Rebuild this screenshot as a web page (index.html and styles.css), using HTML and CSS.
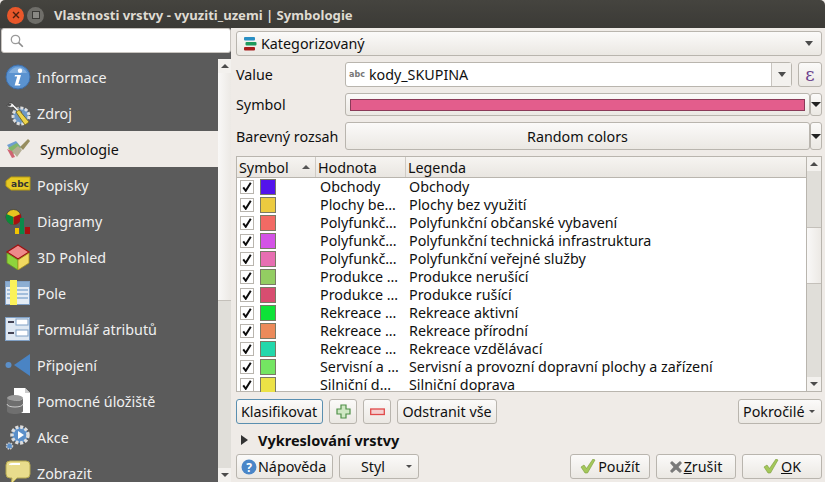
FILE: index.html
```html
<!DOCTYPE html>
<html lang="cs">
<head>
<meta charset="utf-8">
<title>Vlastnosti vrstvy</title>
<link rel="stylesheet" href="styles.css">
</head>
<body>
<svg class="defs" width="0" height="0"><defs><symbol id="tick" viewBox="0 0 12 12"><path d="M1.500 6.500l3 4L10.500 1" fill="none" stroke="#0c0c0c" stroke-width="2.400"/></symbol></defs></svg>
<div class="titlebar">
  <span class="wbtn close"><svg width="10" height="10" viewBox="0 0 10 10"><path d="M2 2l6 6M8 2l-6 6" stroke="#4a2010" stroke-width="1.400"/></svg></span>
  <span class="wbtn max"><span class="maxbox"></span></span>
  <span class="wtitle">Vlastnosti vrstvy - vyuziti_uzemi | Symbologie</span>
</div>
<div class="main">
  <div class="side">
    <div class="search">
      <svg width="14" height="14" viewBox="0 0 14 14"><circle cx="5.500" cy="5.500" r="4.200" fill="none" stroke="#9a9a9a" stroke-width="1.300"/><path d="M8.600 8.600l4.200 4.200" stroke="#8a8a8a" stroke-width="1.600"/></svg>
    </div>
    <div class="sidebody">
      <ul class="nav">
        <li class="item"><svg class="ic" width="26" height="26" viewBox="0 0 26 26"><circle cx="13" cy="13" r="12" fill="#5b93d0" stroke="#3d6da8"/><path d="M4 9a10 10 0 0 1 18 0z" fill="#9cc1e8" opacity=".6"/><circle cx="15" cy="6.800" r="2.200" fill="#fff"/><path d="M10 11h6l-2.600 9h2l-.5 1.600H9.600l2.600-9h-2.600z" fill="#fff"/></svg><span>Informace</span></li>
        <li class="item"><svg class="ic" width="26" height="26" viewBox="0 0 26 26"><circle cx="16" cy="16" r="8" fill="#6d97c4" stroke="#ddd" stroke-width="3" stroke-dasharray="3 1.600"/><path d="M3 4c2-2 5-1 6 1l8 7-2 2-7-7C6 8 2 7 2 5l3 1 1-2z" fill="#eee" stroke="#333" stroke-width=".6"/><path d="M11 12l3-2 10 12-4 3z" fill="#ecd34a" stroke="#6b5c10" stroke-width=".8"/></svg><span>Zdroj</span></li>
        <li class="item sel"><svg class="ic" width="26" height="26" viewBox="0 0 26 26"><path d="M2 9l9-4 5 6-9 5z" fill="#6f9fd0"/><path d="M3 12l9-5 4 5-8 6z" fill="#82b56a"/><path d="M2 13l5 2 3 6-3 1z" fill="#cf6472"/><path d="M7 15l6-5 4 4-5 7z" fill="#b4ae94"/><path d="M15 11l8-8 2 2-7 9z" fill="#978d5f"/></svg><span>Symbologie</span></li>
        <li class="item"><svg class="ic" width="26" height="26" viewBox="0 0 26 26"><path d="M1 8l5-4h19v13H6l-5-4z" fill="#e6c924" stroke="#b69a12" transform="translate(0 1)"/><text x="15" y="15" class="abc">abc</text></svg><span>Popisky</span></li>
        <li class="item"><svg class="ic" width="26" height="26" viewBox="0 0 26 26"><circle cx="8.500" cy="9" r="7.500" fill="#e8c320" stroke="#333" stroke-width=".7"/><path d="M8.500 9v7.500a7.500 7.500 0 0 1-7-10.500z" fill="#0a8a3a"/><path d="M8.500 9v7.500a7.500 7.500 0 0 0 7-10.500z" fill="#a81010"/><rect x="10" y="20" width="4" height="7" fill="#f2c400"/><rect x="15" y="10" width="4" height="17" fill="#0a8a4a"/><rect x="20" y="19" width="5" height="8" fill="#a81010"/></svg><span>Diagramy</span></li>
        <li class="item"><svg class="ic" width="26" height="26" viewBox="0 0 26 26"><path d="M13 1l11 7-11 7L2 8z" fill="#ee8a8a" stroke="#a01010" stroke-width="1.200"/><path d="M2 9l11 7v10L2 19z" fill="#8ed43c" stroke="#6a9a20" stroke-width=".8"/><path d="M24 9l-11 7v10l11-7z" fill="#f0d860" stroke="#a89420" stroke-width=".8"/></svg><span>3D Pohled</span></li>
        <li class="item"><svg class="ic" width="26" height="26" viewBox="0 0 26 26"><rect x=".5" y="1.500" width="24" height="23" fill="#e4ecf5" stroke="#7f9fc4"/><rect x="1" y="2" width="23" height="5" fill="#8caed2"/><path d="M12 10h11M12 14h11M12 18h11M2 10h4M2 14h4M2 18h4" stroke="#8caed2" stroke-width="1.500"/><rect x="5" y="0" width="7" height="25" fill="#fbf25a"/></svg><span>Pole</span></li>
        <li class="item"><svg class="ic" width="26" height="26" viewBox="0 0 26 26"><rect x=".5" y="1.500" width="24" height="23" fill="#dfe8f2" stroke="#7f9fc4"/><rect x="11" y="3" width="12" height="6" fill="#fff" stroke="#7f9fc4"/><rect x="11" y="14" width="12" height="6" fill="#fff" stroke="#7f9fc4"/><path d="M3 6h6M3 17h6" stroke="#445" stroke-width="2"/></svg><span>Formulář atributů</span></li>
        <li class="item"><svg class="ic" width="26" height="26" viewBox="0 0 26 26"><circle cx="3.500" cy="13" r="3" fill="#5b8fc9"/><path d="M25 2v22L9 13z" fill="#4a84c4"/></svg><span>Připojení</span></li>
        <li class="item"><svg class="ic" width="26" height="26" viewBox="0 0 26 26"><path d="M9 0h11l5 5v20H9z" fill="#fff"/><path d="M20 0v5h5z" fill="#ccc"/><ellipse cx="10" cy="10" rx="8" ry="3" fill="#9a9a9a"/><path d="M2 10v13c0 4 16 4 16 0V10c0 4-16 4-16 0z" fill="#6f6f6f"/><path d="M2 16c0 4 16 4 16 0" fill="none" stroke="#ccc"/></svg><span>Pomocné úložiště</span></li>
        <li class="item"><svg class="ic" width="26" height="26" viewBox="0 0 26 26"><circle cx="15" cy="11" r="8" fill="#5b8fc9" stroke="#ddd" stroke-width="3.500" stroke-dasharray="3 1.700"/><path d="M13 7l6 4-6 4z" fill="#fff"/><circle cx="4.500" cy="22" r="3" fill="#5b8fc9" stroke="#ccc" stroke-width="1.500" stroke-dasharray="1.500 1"/></svg><span>Akce</span></li>
        <li class="item"><svg class="ic" width="26" height="26" viewBox="0 0 26 26"><path d="M5 1h16q4 0 4 4v9q0 4-4 4H12l-6 6 1-6H5q-4 0-4-4V5q0-4 4-4z" fill="#e9dc8c" stroke="#b5a850"/><path d="M5 5q0-1 2-1h8" stroke="#fff" stroke-width="2" fill="none"/></svg><span>Zobrazit</span></li>
      </ul>
      <div class="vscroll nav-scroll"><span class="arrow up"></span><span class="thumb nav-thumb"></span><span class="track"></span><span class="arrow down"></span></div>
    </div>
  </div>
  <div class="content">
    <div class="btn combo render"><svg width="14" height="14" viewBox="0 0 14 14"><rect x="0" y="0" width="11" height="3.500" rx="1" fill="#2a8fc4"/><rect x="1.500" y="5" width="11" height="3.500" rx="1" fill="#1e9a5c"/><rect x="0" y="10" width="11" height="3.500" rx="1" fill="#a81c1c"/></svg><span class="grow">Kategorizovaný</span><span class="caret"></span></div>
    <div class="row row-value">
      <label class="lab">Value</label>
      <div class="field"><span class="abc-tag">abc</span><span class="grow">kody_SKUPINA</span><span class="fieldbtn"><span class="caret"></span></span></div>
      <div class="btn eps">ε</div>
    </div>
    <div class="row row-symbol">
      <label class="lab">Symbol</label>
      <div class="btn symbolbtn"><span class="pinkbar"></span></div>
      <div class="btn mini"><span class="caret dark"></span></div>
    </div>
    <div class="row row-ramp">
      <label class="lab">Barevný rozsah</label>
      <div class="btn rampbtn">Random colors</div>
      <div class="btn mini"><span class="caret dark"></span></div>
    </div>
    <div class="table">
      <div class="tbl-main">
        <div class="thead">
          <div class="th c1">Symbol<span class="sort"></span></div>
          <div class="th c2">Hodnota</div>
          <div class="th c3">Legenda</div>
        </div>
        <div class="tbody">
          <div class="tr"><span class="chk"><svg width="10" height="10"><use href="#tick"/></svg></span><span class="sw s1"></span><span class="val">Obchody</span><span class="leg">Obchody</span></div>
          <div class="tr"><span class="chk"><svg width="10" height="10"><use href="#tick"/></svg></span><span class="sw s2"></span><span class="val">Plochy be…</span><span class="leg">Plochy bez využití</span></div>
          <div class="tr"><span class="chk"><svg width="10" height="10"><use href="#tick"/></svg></span><span class="sw s3"></span><span class="val">Polyfunkč…</span><span class="leg">Polyfunkční občanské vybavení</span></div>
          <div class="tr"><span class="chk"><svg width="10" height="10"><use href="#tick"/></svg></span><span class="sw s4"></span><span class="val">Polyfunkč…</span><span class="leg">Polyfunkční technická infrastruktura</span></div>
          <div class="tr"><span class="chk"><svg width="10" height="10"><use href="#tick"/></svg></span><span class="sw s5"></span><span class="val">Polyfunkč…</span><span class="leg">Polyfunkční veřejné služby</span></div>
          <div class="tr"><span class="chk"><svg width="10" height="10"><use href="#tick"/></svg></span><span class="sw s6"></span><span class="val">Produkce …</span><span class="leg">Produkce nerušící</span></div>
          <div class="tr"><span class="chk"><svg width="10" height="10"><use href="#tick"/></svg></span><span class="sw s7"></span><span class="val">Produkce …</span><span class="leg">Produkce rušící</span></div>
          <div class="tr"><span class="chk"><svg width="10" height="10"><use href="#tick"/></svg></span><span class="sw s8"></span><span class="val">Rekreace …</span><span class="leg">Rekreace aktivní</span></div>
          <div class="tr"><span class="chk"><svg width="10" height="10"><use href="#tick"/></svg></span><span class="sw s9"></span><span class="val">Rekreace …</span><span class="leg">Rekreace přírodní</span></div>
          <div class="tr"><span class="chk"><svg width="10" height="10"><use href="#tick"/></svg></span><span class="sw s10"></span><span class="val">Rekreace …</span><span class="leg">Rekreace vzdělávací</span></div>
          <div class="tr"><span class="chk"><svg width="10" height="10"><use href="#tick"/></svg></span><span class="sw s11"></span><span class="val">Servisní a …</span><span class="leg">Servisní a provozní dopravní plochy a zařízení</span></div>
          <div class="tr"><span class="chk"><svg width="10" height="10"><use href="#tick"/></svg></span><span class="sw s12"></span><span class="val">Silniční d…</span><span class="leg">Silniční doprava</span></div>
        </div>
      </div>
      <div class="vscroll tbl-scroll"><span class="arrow up"></span><span class="track track-top"></span><span class="thumb tbl-thumb"></span><span class="track"></span><span class="arrow down"></span></div>
    </div>
    <div class="actions">
      <div class="btn small focus">Klasifikovat</div>
      <div class="btn small icon"><svg width="15" height="15" viewBox="0 0 15 15"><path d="M5 1h5v4h4v5h-4v4H5v-4H1V5h4z" fill="#cfe8c4" stroke="#4f8f48" stroke-width="1.200"/></svg></div>
      <div class="btn small icon"><svg width="15" height="8" viewBox="0 0 15 8"><rect x=".7" y="1" width="13.600" height="5.500" fill="#f4d0d0" stroke="#e04a4a" stroke-width="1.300"/></svg></div>
      <div class="btn small clear">Odstranit vše</div>
      <span class="grow"></span>
      <div class="btn small adv">Pokročilé<span class="caret tiny"></span></div>
    </div>
    <div class="section"><span class="tri"></span><b>Vykreslování vrstvy</b></div>
    <div class="footer">
      <div class="btn foot help"><svg width="16" height="16" viewBox="0 0 16 16"><circle cx="8" cy="8" r="7.500" fill="#4a86c8"/><text x="8" y="12.500" class="q">?</text></svg>Nápověda</div>
      <div class="btn foot styl"><span class="grow center">Styl</span><span class="caret tiny"></span></div>
      <span class="grow"></span>
      <div class="btn foot act"><svg class="chkic" width="16" height="15" viewBox="0 0 16 15"><path d="M1 8l3-2 2.500 3.500L13 0l2 1-7.500 13H5z" fill="#a4c85a" stroke="#7a9a3a" stroke-width=".6"/></svg>Použít</div>
      <div class="btn foot act"><svg width="12" height="12" viewBox="0 0 12 12"><path d="M2 0l4 3.500L10 0l2 2-3.500 4L12 10l-2 2-4-3.500L2 12l-2-2 3.500-4L0 2z" fill="#7a7a7a"/></svg><span><u>Z</u>rušit</span></div>
      <div class="btn foot act"><svg class="chkic" width="16" height="15" viewBox="0 0 16 15"><path d="M1 8l3-2 2.500 3.500L13 0l2 1-7.500 13H5z" fill="#a4c85a" stroke="#7a9a3a" stroke-width=".6"/></svg><span><u>O</u>K</span></div>
    </div>
  </div>
</div>
</body>
</html>
```
FILE: styles.css
```css
* { box-sizing: border-box; }
html, body { margin: 0; padding: 0; height: 482px; overflow: hidden; }
body { width: 825px; background: #efebe7; font-family: "Noto Sans", sans-serif; font-size: 14.3px; color: #101010; }
.defs { display: block; height: 0; }
.titlebar { height: 28px; background: linear-gradient(#45443f, #3b3a36); display: flex; align-items: center; padding: 2px 0 0 7px; border-radius: 5px 5px 0 0; }
.wbtn { width: 17px; height: 17px; border-radius: 50%; display: flex; align-items: center; justify-content: center; margin-right: 3px; flex: none; }
.close { background: #e9572a; }
.max { background: #6f6e69; }
.maxbox { width: 8px; height: 8px; border: 1px solid #3b3a36; background: #8a8984; }
.wtitle { color: #dfdbd2; font-weight: 700; font-size: 13.1px; margin-left: 7px; }
.main { display: flex; height: 454px; }
.side { width: 231px; flex: none; background: #5b5b5b; display: flex; flex-direction: column; }
.search { height: 25px; margin: 0 0 6px 1px; background: #fff; border: 1px solid #c8c4bf; border-radius: 3px; padding: 4px 0 0 8px; flex: none; }
.sidebody { display: flex; flex: 1; min-height: 0; }
.nav { list-style: none; margin: 0; padding: 0; width: 218px; overflow: hidden; flex: none; }
.item { height: 36px; display: flex; align-items: center; padding-left: 5px; color: #f0f0f0; }
.item .ic { flex: none; margin-right: 6px; }
.item.sel { background: #efebe7; color: #101010; }
.item.sel span { margin-left: 3px; }
.abc { font: 700 9px "DejaVu Sans", sans-serif; fill: #333; text-anchor: middle; }
.vscroll { display: flex; flex-direction: column; width: 13px; background: #efebe7; }
.arrow { height: 14px; flex: none; position: relative; background: #f3f1ee; }
.arrow::after { content: ""; position: absolute; left: 3px; top: 5px; border-left: 4px solid transparent; border-right: 4px solid transparent; }
.arrow.up::after { border-bottom: 4px solid #4c4c4c; }
.arrow.down::after { border-top: 4px solid #4c4c4c; }
.track { flex: 1; background: #e0ded9; display: block; }
.track-top { flex: none; height: 56px; }
.thumb { display: block; flex: none; background: linear-gradient(90deg, #f9f8f7, #ece9e5); border-bottom: 1px solid #c4c0ba; }
.nav-thumb { height: 228px; }
.tbl-thumb { height: 57px; border-top: 1px solid #c4c0ba; }
.content { flex: 1; padding: 3px 3px 0 5px; display: flex; flex-direction: column; min-width: 0; }
.content > * { flex: none; }
.btn { display: flex; align-items: center; border: 1px solid #b9b5ae; border-radius: 3px; background: linear-gradient(#fbfaf9, #ebe8e3); }
.grow { flex: 1; }
.center { text-align: center; }
.caret { width: 0; height: 0; border-left: 4px solid transparent; border-right: 4px solid transparent; border-top: 5px solid #4c4c4c; flex: none; }
.caret.dark { border-left-width: 5px; border-right-width: 5px; border-top-color: #222; }
.caret.tiny { border-left-width: 3px; border-right-width: 3px; border-top-width: 3px; }
.render { height: 25px; padding: 0 8px 0 7px; gap: 3px; }
.row { display: flex; align-items: center; }
.lab { width: 109px; flex: none; }
.row-value { height: 25px; margin-top: 6px; }
.field { flex: 1; height: 25px; background: #fff; border: 1px solid #b9b5ae; border-radius: 3px; display: flex; align-items: center; padding-left: 3px; }
.abc-tag { font: 700 8px "DejaVu Sans", sans-serif; color: #777; margin-right: 4px; }
.fieldbtn { width: 20px; height: 23px; border-left: 1px solid #c8c4bf; background: #f3f1ee; display: flex; align-items: center; justify-content: center; flex: none; }
.eps { width: 24px; height: 25px; margin-left: 6px; justify-content: center; color: #6b3f8c; font: 18px "DejaVu Serif", serif; flex: none; }
.row-symbol { height: 23px; margin-top: 6px; }
.symbolbtn { flex: 1; height: 23px; padding: 0 4px; }
.pinkbar { display: block; width: 100%; height: 12px; background: #e35d8c; border: 1px solid #8a3a58; }
.mini { width: 12px; height: 23px; justify-content: center; flex: none; }
.row-ramp { height: 28px; margin-top: 6px; }
.rampbtn { flex: 1; height: 28px; justify-content: center; }
.row-ramp .mini { height: 28px; }
.table { display: flex; height: 236px; margin-top: 6px; border: 1px solid #b9b5ae; background: #fff; }
.tbl-main { flex: 1; min-width: 0; }
.thead { display: flex; height: 21px; background: linear-gradient(#f6f4f1, #e9e6e1); border-bottom: 1px solid #b9b5ae; }
.th { padding: 1px 0 0 2px; line-height: 20px; border-right: 1px solid #cfcbc5; position: relative; flex: none; }
.c1 { width: 79px; }
.c2 { width: 90px; }
.c3 { flex: 1; border-right: 0; }
.sort { position: absolute; right: 5px; top: 8px; border-left: 4px solid transparent; border-right: 4px solid transparent; border-bottom: 4px solid #555; }
.tbody { height: 214px; overflow: hidden; }
.tr { display: flex; align-items: center; height: 18px; }
.chk { width: 14px; height: 14px; margin-left: 3px; border: 1px solid #b9b5ae; background: #fff; display: flex; align-items: center; justify-content: center; flex: none; }
.sw { width: 16px; height: 16px; margin-left: 6px; border: 1px solid #7a7a66; flex: none; }
.s1 { background: #5314ec; } .s2 { background: #eccb40; } .s3 { background: #f26a64; } .s4 { background: #d353e6; } .s5 { background: #e76fb2; } .s6 { background: #93cd62; } .s7 { background: #d84d70; } .s8 { background: #0ee338; } .s9 { background: #ec8a5a; } .s10 { background: #22d8ab; } .s11 { background: #74e562; } .s12 { background: #ece246; }
.val { width: 89px; margin-left: 44px; padding-bottom: 2px; flex: none; white-space: nowrap; overflow: hidden; }
.leg { white-space: nowrap; padding-bottom: 2px; }
.tbl-scroll { width: 15px; flex: none; border-left: 1px solid #b9b5ae; }
.actions { display: flex; height: 25px; margin-top: 7px; gap: 6px; }
.small { padding: 0 4px; height: 25px; flex: none; }
.focus { border-color: #5a8fb0; width: 87px; }
.icon { width: 28px; justify-content: center; padding: 0; }
.clear { width: 100px; justify-content: center; }
.adv { width: 84px; gap: 4px; }
.section { display: flex; align-items: center; height: 18px; margin-top: 7px; padding-left: 5px; gap: 10px; }
.section b { font-size: 14.5px; }
.tri { border-top: 5px solid transparent; border-bottom: 5px solid transparent; border-left: 7px solid #333; }
.footer { display: flex; height: 25px; margin-top: 5px; gap: 6px; }
.foot { height: 25px; flex: none; }
.help { width: 97px; padding-left: 4px; gap: 1px; }
.q { font: 700 12px "Noto Sans", sans-serif; fill: #fff; text-anchor: middle; }
.styl { width: 80px; padding-right: 6px; }
.act { width: 80px; justify-content: center; gap: 2px; }
```
